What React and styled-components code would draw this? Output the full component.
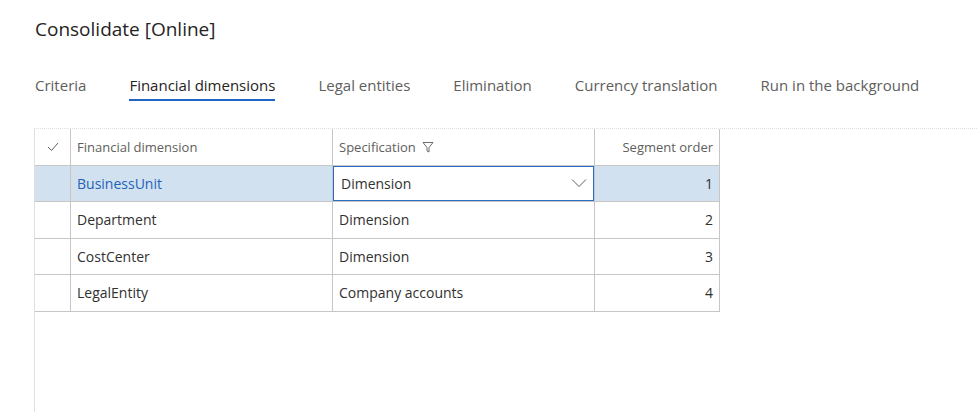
import React from 'react';
import styled, { createGlobalStyle } from 'styled-components';

const Global = createGlobalStyle`
  body { margin: 0; background: #fff; font-family: "Open Sans", "Noto Sans", sans-serif; color: #323130; }
`;

const tabs = ['Criteria', 'Financial dimensions', 'Legal entities', 'Elimination', 'Currency translation', 'Run in the background'];
const rows = [
  { name: 'BusinessUnit', spec: 'Dimension', order: 1, selected: true },
  { name: 'Department', spec: 'Dimension', order: 2 },
  { name: 'CostCenter', spec: 'Dimension', order: 3 },
  { name: 'LegalEntity', spec: 'Company accounts', order: 4 },
];

export default function App() {
  return (
    <Page>
      <Global />
      <Title>Consolidate [Online]</Title>
      <TabBar>
        {tabs.map((t, i) => <Tab key={t} active={i === 1}>{t}</Tab>)}
      </TabBar>
      <GridArea>
        <Grid>
          <HeadCell>
            <svg width="12" height="10" viewBox="0 0 12 10"><path d="M1 5l3.5 3.5L11 1" fill="none" stroke="#605e5c" strokeWidth="1" /></svg>
          </HeadCell>
          <HeadCell>Financial dimension</HeadCell>
          <HeadCell>
            Specification
            <svg width="12" height="12" viewBox="0 0 12 12" style={{ marginLeft: 6 }}><path d="M1 1.5h10L7 6.5V11L5 10V6.5z" fill="none" stroke="#605e5c" strokeWidth="0.9" /></svg>
          </HeadCell>
          <HeadCell right>Segment order</HeadCell>
          {rows.map((r) => (
            <React.Fragment key={r.name}>
              <Cell selected={r.selected} />
              <Cell selected={r.selected} link={r.selected}>{r.name}</Cell>
              {r.selected ? (
                <SelectCell>
                  <SelectBox>
                    Dimension
                    <svg width="16" height="10" viewBox="0 0 16 10"><path d="M1 1.5l7 7 7-7" fill="none" stroke="#605e5c" strokeWidth="1" /></svg>
                  </SelectBox>
                </SelectCell>
              ) : (
                <Cell>{r.spec}</Cell>
              )}
              <Cell selected={r.selected} right>{r.order}</Cell>
            </React.Fragment>
          ))}
        </Grid>
      </GridArea>
    </Page>
  );
}

const Page = styled.div`width: 977px; height: 412px; overflow: hidden;`;
const Title = styled.div`padding: 16px 0 0 35px; font-size: 19px; height: 28px; color: #252423;`;
const TabBar = styled.div`display: flex; gap: 43px; padding: 31px 0 0 35px; height: 31px;`;
const Tab = styled.div`
  font-size: 15px; color: ${({ active }) => (active ? '#252423' : '#605e5c')};
  height: 26px; box-sizing: border-box;
  border-bottom: ${({ active }) => (active ? '2px solid #2266c5' : '2px solid transparent')};
`;
const GridArea = styled.div`
  margin-top: 22px; margin-left: 34px; height: 290px;
  border-left: 1px solid #e1dfdd; border-top: 1px dotted #e1dfdd;
`;
const Grid = styled.div`
  display: grid; grid-template-columns: 36px 262px 262px 125px; width: 685px;
  grid-auto-rows: 36.5px;
`;
const HeadCell = styled.div`
  display: flex; align-items: center; justify-content: ${({ right }) => (right ? 'flex-end' : 'flex-start')};
  font-size: 13px; color: #605e5c; padding: 0 6px; box-sizing: border-box;
  border-right: 1px solid #c8c6c4; border-bottom: 1px solid #c8c6c4;
  &:first-child { justify-content: center; }
`;
const Cell = styled.div`
  display: flex; align-items: center; justify-content: ${({ right }) => (right ? 'flex-end' : 'flex-start')};
  font-size: 14px; padding: 0 6px; box-sizing: border-box;
  background: ${({ selected }) => (selected ? '#d2e1f0' : '#fff')};
  color: ${({ link }) => (link ? '#1e63b6' : '#323130')};
  border-right: 1px solid #c8c6c4; border-bottom: 1px solid #c8c6c4;
`;
const SelectCell = styled.div`
  display: flex; border-right: 1px solid #c8c6c4; border-bottom: 1px solid #c8c6c4; background: #d2e1f0;
`;
const SelectBox = styled.div`
  flex: 1; display: flex; align-items: center; justify-content: space-between;
  border: 1px solid #2b6cc4; background: #fff; font-size: 14px; padding: 0 6px 0 7px; color: #323130;
`;
